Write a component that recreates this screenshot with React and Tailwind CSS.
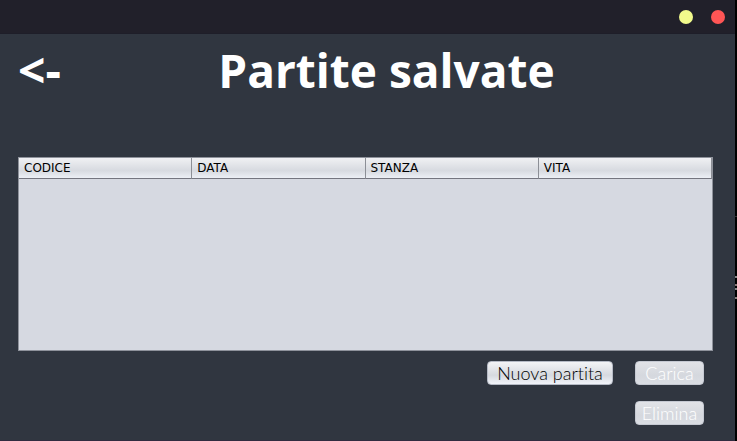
const columns = ["CODICE", "DATA", "STANZA", "VITA"];

function TitleBar() {
  return (
    <header className="flex h-[34px] items-center justify-end gap-[18px] border-b border-[#1e1e29] bg-[#21202a] pr-[10px]">
      <button type="button" aria-label="Riduci" className="size-[14px] rounded-full bg-[#f1fa8c]" />
      <button type="button" aria-label="Chiudi" className="size-[14px] rounded-full bg-[#ff5555]" />
    </header>
  );
}

function SavedGames() {
  return (
    <div className="h-[194px] border border-[#8e929b] bg-[#d6d9e1]">
      <table className="w-full table-fixed border-separate border-spacing-0">
        <thead>
          <tr className="bg-linear-to-b from-[#f0f1f3] via-[#d7dae0] via-60% to-[#eff2f8]">
            {columns.map((name) => (
              <th
                key={name}
                scope="col"
                className="border-r border-b border-r-[#8c8f96] border-b-[#74757f] py-0 pl-[5px] text-left font-['DejaVu_Sans',sans-serif] text-[12px] leading-5 font-normal text-black"
              >
                {name}
              </th>
            ))}
          </tr>
        </thead>
        <tbody />
      </table>
    </div>
  );
}

const buttonBase =
  "h-6 rounded-[4px] border text-center font-['Lato','Open_Sans',sans-serif] text-[18px] leading-6 font-light [font-variant-ligatures:none]";

function ActionButton({ children }) {
  return (
    <button
      type="button"
      disabled
      className={`${buttonBase} flex w-[69px] items-center justify-center border-[#c5c9d2] bg-linear-to-b from-[#e1e3e7] via-[#d5d8de] via-60% to-[#dadde3] text-white`}
    >
      {children}
    </button>
  );
}

export default function App() {
  return (
    <div className="flex min-h-screen bg-black">
      <div className="flex min-w-0 flex-1 flex-col bg-[#303640]">
        <TitleBar />
        <main className="flex flex-1 flex-col pr-[22px] pl-[18px]">
          <div className="grid h-[70px] grid-cols-[46px_1fr_46px] items-center font-['Open_Sans','Noto_Sans',sans-serif] font-bold text-white">
            <button type="button" aria-label="Indietro" className="text-left text-[48px] whitespace-nowrap">
              &lt;-
            </button>
            <h1 className="pl-[42px] text-center text-[46px] whitespace-nowrap">Partite salvate</h1>
          </div>
          <div className="pt-[53px]">
            <SavedGames />
          </div>
          <div className="flex items-start justify-end gap-[22px] pt-[10px] pr-[9px]">
            <button
              type="button"
              className={`${buttonBase} flex w-[126px] items-center justify-center border-[#b5bac5] bg-linear-to-b from-[#f3f4f6] via-[#d6d9df] via-60% to-[#f1f4fa] text-black`}
            >
              Nuova partita
            </button>
            <div className="flex flex-col gap-4">
              <ActionButton>Carica</ActionButton>
              <ActionButton>Elimina</ActionButton>
            </div>
          </div>
        </main>
        <div className="h-px bg-[#302c40]" />
      </div>
      <div aria-hidden="true" className="flex w-[2px] flex-col bg-black">
        <i className="mt-[216px] h-px bg-[#333333]" />
        <i className="mt-[59px] h-[2px] bg-[#888888]" />
        <i className="mt-[6px] h-[2px] bg-[#887777]" />
        <i className="mt-[2px] h-[2px] bg-[#888888]" />
        <i className="mt-[7px] h-[2px] bg-[#88827e]" />
      </div>
    </div>
  );
}
